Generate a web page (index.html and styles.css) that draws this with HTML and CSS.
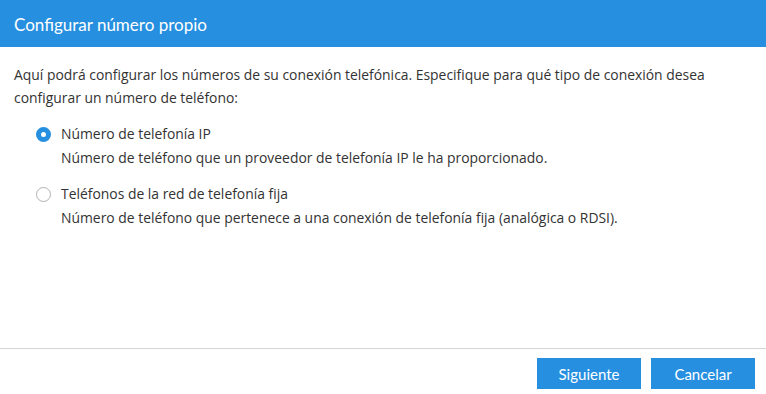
FILE: index.html
```html
<!DOCTYPE html>
<html lang="es">
<head>
<meta charset="utf-8">
<link rel="stylesheet" href="styles.css">
</head>
<body>
<div class="dialog">
  <header class="head">Configurar número propio</header>
  <main class="content">
    <p class="intro">Aquí podrá configurar los números de su conexión telefónica. Especifique para qué tipo de conexión desea configurar un número de teléfono:</p>
    <div class="option">
      <label class="opt-label"><span class="radio checked"></span>Número de telefonía IP</label>
      <p class="desc">Número de teléfono que un proveedor de telefonía IP le ha proporcionado.</p>
    </div>
    <div class="option">
      <label class="opt-label"><span class="radio"></span>Teléfonos de la red de telefonía fija</label>
      <p class="desc">Número de teléfono que pertenece a una conexión de telefonía fija (analógica o RDSI).</p>
    </div>
  </main>
  <footer class="foot">
    <button class="btn">Siguiente</button>
    <button class="btn">Cancelar</button>
  </footer>
</div>
</body>
</html>
```
FILE: styles.css
```css
* { box-sizing: border-box; }
html, body { margin: 0; padding: 0; background: #fff; }
body {
  font-family: "Open Sans", sans-serif;
  color: #333;
  width: 766px;
  height: 394px;
  overflow: hidden;
}
.dialog { display: flex; flex-direction: column; height: 394px; }
.head {
  background: #278fdf;
  color: #fff;
  height: 47px;
  padding: 2px 14px 0;
  display: flex;
  align-items: center;
  font-family: Lato, sans-serif;
  font-size: 17px;
}
.content { flex: 1; padding: 16px 14px 0; }
.intro { margin: 0; font-size: 13.9px; line-height: 23px; width: 720px; }
.option { margin-top: 15px; padding-left: 22px; }
.option + .option { margin-top: 16px; }
.opt-label { display: flex; align-items: center; font-size: 13.9px; line-height: 20px; }
.radio {
  width: 15px; height: 15px; border-radius: 50%;
  border: 1px solid #b0b0b0;
  margin-right: 10px;
  flex: none;
}
.radio.checked { border: 5px solid #278fdf; background: #fff; }
.desc { margin: 4px 0 0 25px; font-size: 13.9px; line-height: 20px; }
.foot {
  border-top: 1px solid #d4d4d4;
  height: 46px;
  display: flex;
  justify-content: flex-end;
  gap: 10px;
  padding: 9px 11px 0 0;
}
.btn {
  width: 104px; height: 31px;
  background: #278fdf; color: #fff;
  border: 0; border-radius: 0;
  font-family: Lato, sans-serif;
  font-size: 15px;
  padding: 0;
}
```
